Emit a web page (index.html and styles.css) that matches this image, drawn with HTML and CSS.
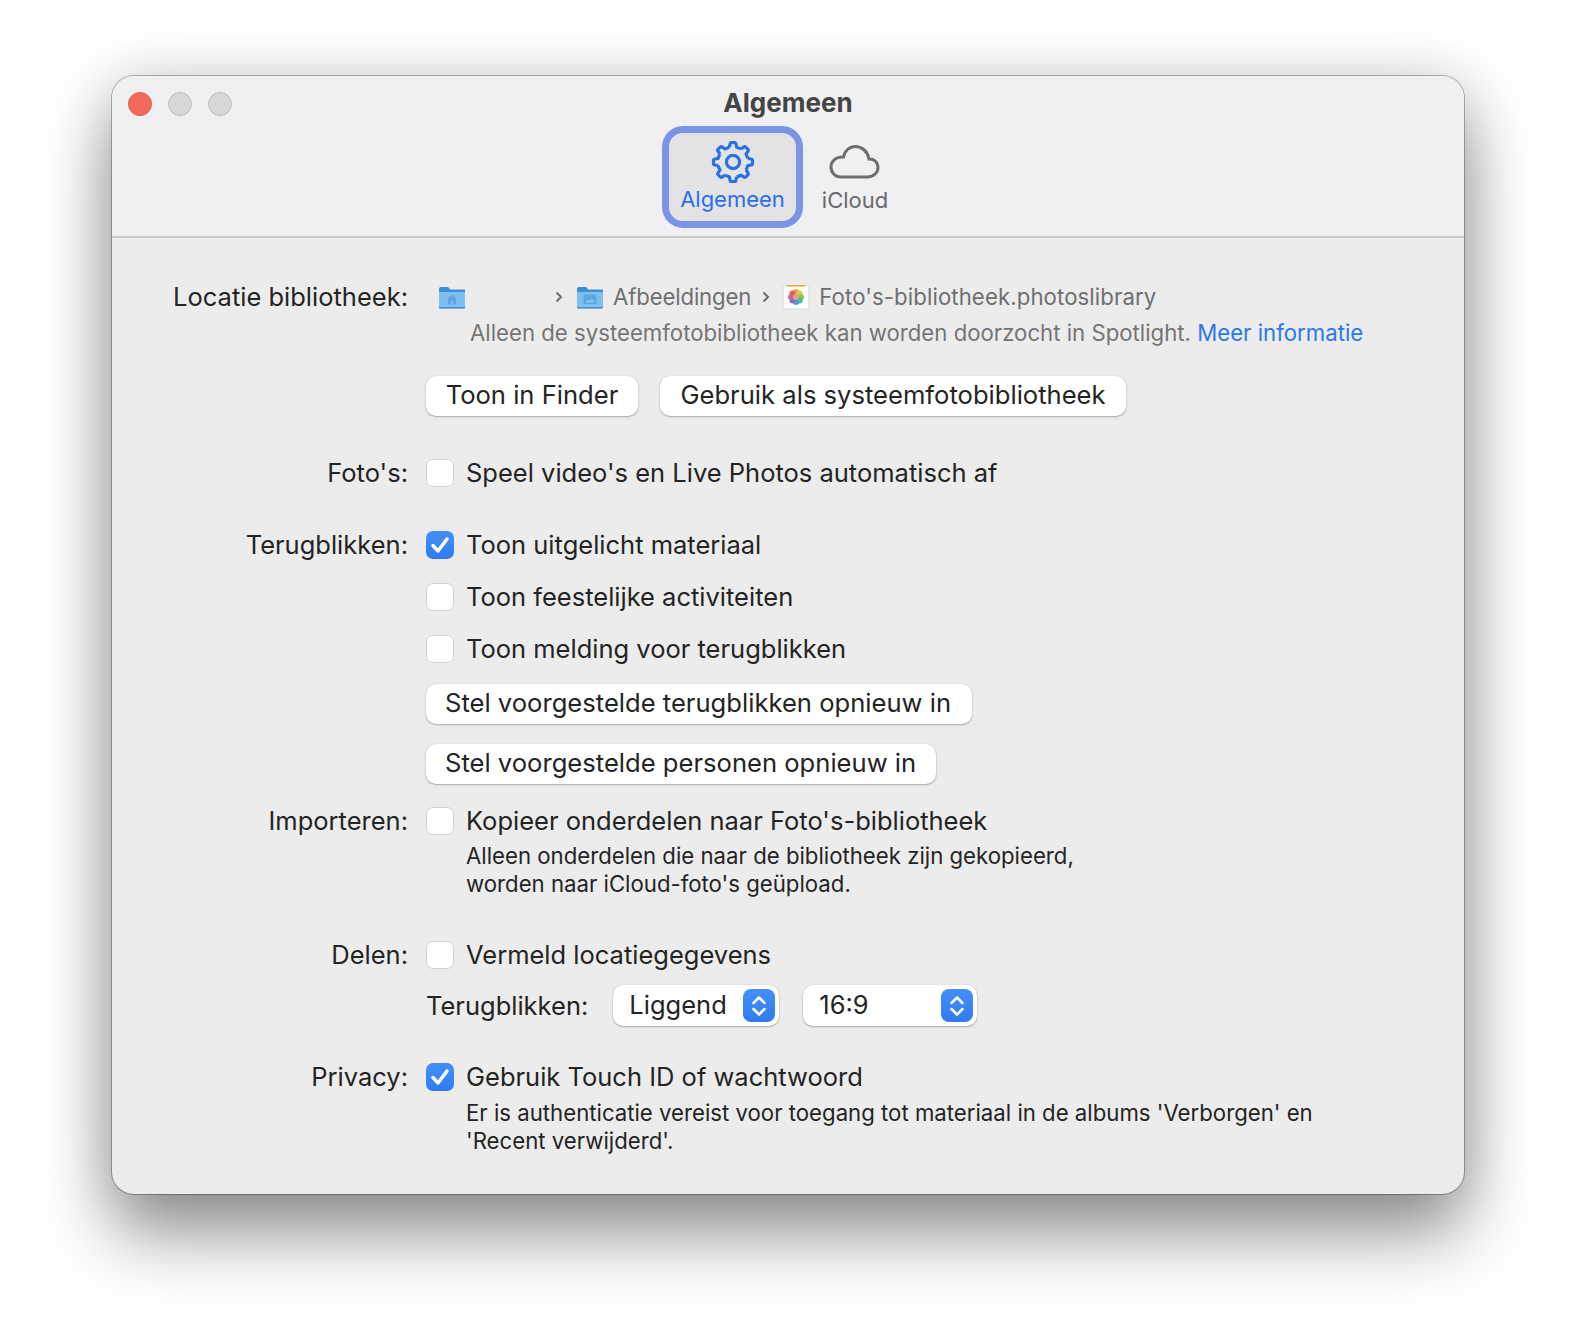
FILE: index.html
```html
<!DOCTYPE html>
<html lang="nl">
<head>
  <meta charset="UTF-8">
  <meta name="viewport" content="width=device-width, initial-scale=1.0">
  <title>Algemeen</title>
  <link rel="stylesheet" href="styles.css">
</head>
<body>
  <div class="window">
    <div class="toolbar">
      <div class="lights">
        <span class="light red"></span>
        <span class="light"></span>
        <span class="light"></span>
      </div>
      <div class="title">Algemeen</div>
      <div class="tabs">
        <div class="tab active">
          <svg class="gear" width="44" height="44" viewBox="-22 -22 44 44">
            <defs>
              <path id="gear-part" d="M-3.6 -14.8 L-3 -18 Q-2.8 -19.5 -1.4 -19.5 H1.4 Q2.8 -19.5 3 -18 L3.6 -14.8 A15.2 15.2 0 0 1 7.92 -13"/>
            </defs>
            <use href="#gear-part"/>
            <use href="#gear-part" transform="rotate(45)"/>
            <use href="#gear-part" transform="rotate(90)"/>
            <use href="#gear-part" transform="rotate(135)"/>
            <use href="#gear-part" transform="rotate(180)"/>
            <use href="#gear-part" transform="rotate(225)"/>
            <use href="#gear-part" transform="rotate(270)"/>
            <use href="#gear-part" transform="rotate(315)"/>
            <circle r="6.6"/>
          </svg>
          <span>Algemeen</span>
        </div>
        <div class="tab">
          <svg class="cloud" width="52" height="44" viewBox="0 0 52 44">
            <path d="M13 38 H39 C45 38 50 34 50 28.500 C50 23 45.500 19.500 41 20 C39.500 12 33.500 7.500 27.500 7.500 C21 7.500 16.500 12 15.500 18 C8 17.500 3 22 3 28 C3 34 7.500 38 13 38 Z"/>
          </svg>
          <span>iCloud</span>
        </div>
      </div>
    </div>

    <div class="prefs">
      <div class="label loc-label">Locatie bibliotheek:</div>
      <div class="cell loc-cell">
        <div class="path">
          <svg class="folder" width="28" height="24" viewBox="0 0 28 24">
            <path class="folder-back" d="M1 4 Q1 2 3 2 H10 L12.500 4.500 H27 V22 Q27 23 26 23 H2 Q1 23 1 22 Z"/>
            <path class="folder-front" d="M1 7 H27 V21 Q27 22 26 22 H2 Q1 22 1 21 Z"/>
            <path class="folder-mark" d="M14 9.500 L19.500 14.500 H18 V19.500 H15.200 V16 H12.800 V19.500 H10 V14.500 H8.500 Z"/>
          </svg>
          <span class="path-blank"></span>
          <svg class="chevron" width="8" height="12" viewBox="0 0 8 12"><path d="M1.500 1.500 L6 6 L1.500 10.500"/></svg>
          <svg class="folder" width="28" height="24" viewBox="0 0 28 24">
            <path class="folder-back" d="M1 4 Q1 2 3 2 H10 L12.500 4.500 H27 V22 Q27 23 26 23 H2 Q1 23 1 22 Z"/>
            <path class="folder-front" d="M1 7 H27 V21 Q27 22 26 22 H2 Q1 22 1 21 Z"/>
            <path class="folder-pic" d="M7.500 9.500 H20.500 V19 H7.500 Z M9 17.800 H19 L15.800 13.500 L13.300 16 L11.800 14.700 Z"/>
          </svg>
          <span class="path-text path-folder">Afbeeldingen</span>
          <svg class="chevron" width="8" height="12" viewBox="0 0 8 12"><path d="M1.500 1.500 L6 6 L1.500 10.500"/></svg>
          <svg class="library" width="28" height="26" viewBox="0 0 28 26">
            <rect x="1" y="1.500" width="26" height="23.500" rx="1.500" fill="#fff" stroke="#d8d8d8"/>
            <rect x="5" y="1" width="18" height="1.500" fill="#e8a33c"/>
            <circle cx="14" cy="8" r="3" fill="#f4a93a"/>
            <circle cx="17.500" cy="9.500" r="3" fill="#e6c93f"/>
            <circle cx="19" cy="13" r="3" fill="#8cc652"/>
            <circle cx="17.500" cy="16.500" r="3" fill="#4fb98a"/>
            <circle cx="14" cy="18" r="3" fill="#4a9fd8"/>
            <circle cx="10.500" cy="16.500" r="3" fill="#7d6fc9"/>
            <circle cx="9" cy="13" r="3" fill="#c565ae"/>
            <circle cx="10.500" cy="9.500" r="3" fill="#ea5f55"/>
            <circle cx="14" cy="13" r="3" fill="#d9a58f"/>
          </svg>
          <span class="path-text path-library">Foto's-bibliotheek.photoslibrary</span>
        </div>
        <div class="hint">Alleen de systeemfotobibliotheek kan worden doorzocht in Spotlight. <a href="#">Meer informatie</a></div>
        <div class="btn-row">
          <button class="btn btn-finder">Toon in Finder</button>
          <button class="btn btn-system">Gebruik als systeemfotobibliotheek</button>
        </div>
      </div>

      <div class="label photos-label">Foto's:</div>
      <div class="cell photos-cell">
        <label class="check"><span class="box"></span>Speel video's en Live Photos automatisch af</label>
      </div>

      <div class="label memories-label">Terugblikken:</div>
      <div class="cell memories-cell">
        <label class="check"><span class="box on"><svg width="20" height="18" viewBox="0 0 20 18"><path d="M3 9.500 L8 15 L17 3"/></svg></span>Toon uitgelicht materiaal</label>
        <label class="check"><span class="box"></span>Toon feestelijke activiteiten</label>
        <label class="check"><span class="box"></span>Toon melding voor terugblikken</label>
        <button class="btn btn-reset-a">Stel voorgestelde terugblikken opnieuw in</button>
        <button class="btn btn-reset-b">Stel voorgestelde personen opnieuw in</button>
      </div>

      <div class="label import-label">Importeren:</div>
      <div class="cell import-cell">
        <label class="check"><span class="box"></span>Kopieer onderdelen naar Foto's-bibliotheek</label>
        <p class="note">Alleen onderdelen die naar de bibliotheek zijn gekopieerd,<br>worden naar iCloud-foto's geüpload.</p>
      </div>

      <div class="label share-label">Delen:</div>
      <div class="cell share-cell">
        <label class="check"><span class="box"></span>Vermeld locatiegegevens</label>
        <div class="select-row">
          <span class="select-label">Terugblikken:</span>
          <div class="select select-a">Liggend
            <span class="stepper"><svg width="18" height="26" viewBox="0 0 18 26"><path d="M3.500 10 L9 4.500 L14.500 10 M3.500 16 L9 21.500 L14.500 16"/></svg></span>
          </div>
          <div class="select select-b">16:9
            <span class="stepper"><svg width="18" height="26" viewBox="0 0 18 26"><path d="M3.500 10 L9 4.500 L14.500 10 M3.500 16 L9 21.500 L14.500 16"/></svg></span>
          </div>
        </div>
      </div>

      <div class="label privacy-label">Privacy:</div>
      <div class="cell privacy-cell">
        <label class="check"><span class="box on"><svg width="20" height="18" viewBox="0 0 20 18"><path d="M3 9.500 L8 15 L17 3"/></svg></span>Gebruik Touch ID of wachtwoord</label>
        <p class="note">Er is authenticatie vereist voor toegang tot materiaal in de albums 'Verborgen' en<br>'Recent verwijderd'.</p>
      </div>
    </div>
  </div>
</body>
</html>
```

FILE: styles.css
```css
* {
  box-sizing: border-box;
}

html, body {
  height: 100%;
}

body {
  margin: 0;
  padding: 76px 112px 0;
  background: #fff;
  color: #242424;
  font-family: Inter, "Liberation Sans", sans-serif;
  font-size: 25.5px;
  overflow: hidden;
}

.window {
  height: 1118px;
  background: #ececec;
  border-radius: 22px;
  box-shadow: 0 0 0 1px rgba(0, 0, 0, 0.28), 0 40px 70px rgba(0, 0, 0, 0.42), 0 0 60px rgba(0, 0, 0, 0.14);
  overflow: hidden;
}

/* toolbar */
.toolbar {
  position: relative;
  height: 162px;
  background: #f0f0f2;
  border-bottom: 2px solid #c9c9c9;
}

.lights {
  position: absolute;
  top: 16px;
  left: 16px;
  display: flex;
  gap: 16px;
}

.light {
  width: 24px;
  height: 24px;
  border-radius: 50%;
  background: #d7d7d9;
  border: 1px solid #bcbcbc;
}

.light.red {
  background: #f1695c;
  border-color: #dc5a4e;
}

.title {
  padding-top: 11px;
  height: 50px;
  text-align: center;
  font-size: 26px;
  font-weight: 700;
  color: #454545;
}

.tabs {
  display: flex;
  justify-content: center;
  padding-right: 7px;
}

.tab {
  display: flex;
  flex-direction: column;
  align-items: center;
  width: 104px;
  height: 102px;
  padding-top: 7px;
  font-size: 22px;
  color: #6a6a6a;
  border: 7px solid transparent;
  border-radius: 21px;
}

.tab.active {
  width: 141px;
  color: #2a6ee8;
  background: #e3e3e6;
  border-color: #7b94e6;
}

.gear {
  fill: none;
  stroke: #2a6ee8;
  stroke-width: 3.2;
  stroke-linejoin: round;
}

.tab span {
  margin-top: 3px;
  line-height: 28px;
}

.tab.active span {
  margin-top: 1px;
}

.cloud {
  margin: -1px 3px 0 0;
  fill: none;
  stroke: #6e6e6e;
  stroke-width: 3;
}

/* settings grid */
.prefs {
  display: grid;
  grid-template-columns: 296px 1fr;
  column-gap: 18px;
  align-items: start;
}

.label {
  text-align: right;
  line-height: 32px;
  white-space: nowrap;
}

.cell {
  min-width: 0;
}

.loc-label, .loc-cell {
  margin-top: 43px;
}

.path {
  display: flex;
  align-items: center;
  height: 32px;
  margin-left: 12px;
  color: #6f6f6f;
  font-size: 22.2px;
}

.folder {
  filter: drop-shadow(0 1px 0 rgba(60, 110, 150, 0.5));
}

.folder-back {
  fill: #3f8fd8;
}

.folder-front {
  fill: #7cc0f1;
}

.folder-mark {
  fill: #5ea6dd;
}

.folder-pic {
  fill: #5ea6dd;
  fill-rule: evenodd;
}

.path-blank {
  width: 89px;
}

.chevron {
  fill: none;
  stroke: #6f6f6f;
  stroke-width: 2;
  margin-right: 13px;
}

.path-text {
  position: relative;
  top: -1px;
  margin-right: 11px;
}

.path-folder {
  margin-left: 9px;
  letter-spacing: -0.15px;
}

.path-text + .chevron {
  margin-right: 12px;
}

.path-library {
  margin-left: 9px;
  letter-spacing: 0.1px;
}

.hint {
  margin-top: 5px;
  margin-left: 44px;
  font-size: 22.2px;
  line-height: 30px;
  color: #757575;
}

.hint a {
  color: #2b78ee;
  text-decoration: none;
}

.btn-row {
  display: flex;
  gap: 22px;
  margin-top: 28px;
}

.btn {
  display: block;
  height: 40px;
  padding: 0 0 2px;
  border: 0;
  border-radius: 10px;
  background: #fff;
  color: #242424;
  font: inherit;
  font-size: 25.6px;
  line-height: 36px;
  white-space: nowrap;
  box-shadow: 0 1px 2px rgba(0, 0, 0, 0.28), 0 0 1px rgba(0, 0, 0, 0.2);
}

.btn-finder {
  width: 212px;
}

.btn-system {
  width: 466px;
}

.btn-reset-a, .btn-reset-b {
  padding-left: 19px;
  text-align: left;
}

.btn-reset-a {
  width: 546px;
  margin-top: 19px;
}

.btn-reset-b {
  width: 510px;
  margin-top: 20px;
}

.check {
  display: flex;
  align-items: center;
  height: 32px;
  line-height: 32px;
  white-space: nowrap;
}

.box {
  display: flex;
  align-items: center;
  justify-content: center;
  flex: none;
  width: 28px;
  height: 28px;
  margin-right: 12px;
  background: #fff;
  border: 1px solid #d2d2d2;
  border-radius: 7px;
}

.box.on {
  background: linear-gradient(#4390fb, #2f7bf0);
  border: 0;
}

.box svg {
  fill: none;
  stroke: #fff;
  stroke-width: 3.500;
  stroke-linecap: round;
  stroke-linejoin: round;
}

.photos-label, .photos-cell {
  margin-top: 41px;
}

.memories-label, .memories-cell {
  margin-top: 40px;
}

.memories-cell .check + .check {
  margin-top: 20px;
}

.import-label, .import-cell {
  margin-top: 21px;
}

.note {
  margin: 5px 0 0 40px;
  font-size: 22.2px;
  line-height: 28px;
  white-space: nowrap;
}

.share-label, .share-cell {
  margin-top: 41px;
}

.select-row {
  display: flex;
  align-items: center;
  margin-top: 14px;
}

.select-label {
  margin-right: 25px;
}

.select {
  position: relative;
  height: 41px;
  padding-left: 16px;
  border-radius: 10px;
  background: #fff;
  line-height: 39px;
  box-shadow: 0 1px 2px rgba(0, 0, 0, 0.28), 0 0 1px rgba(0, 0, 0, 0.2);
}

.select-a {
  width: 166px;
  margin-right: 24px;
}

.select-b {
  width: 174px;
}

.stepper {
  position: absolute;
  top: 4px;
  right: 4px;
  display: flex;
  align-items: center;
  justify-content: center;
  width: 32px;
  height: 33px;
  border-radius: 8px;
  background: linear-gradient(#4390fb, #2f7bf0);
}

.stepper svg {
  fill: none;
  stroke: #fff;
  stroke-width: 2.500;
  stroke-linecap: round;
  stroke-linejoin: round;
}

.privacy-label, .privacy-cell {
  margin-top: 35px;
}

.privacy-cell .note {
  margin-top: 6px;
}
```
